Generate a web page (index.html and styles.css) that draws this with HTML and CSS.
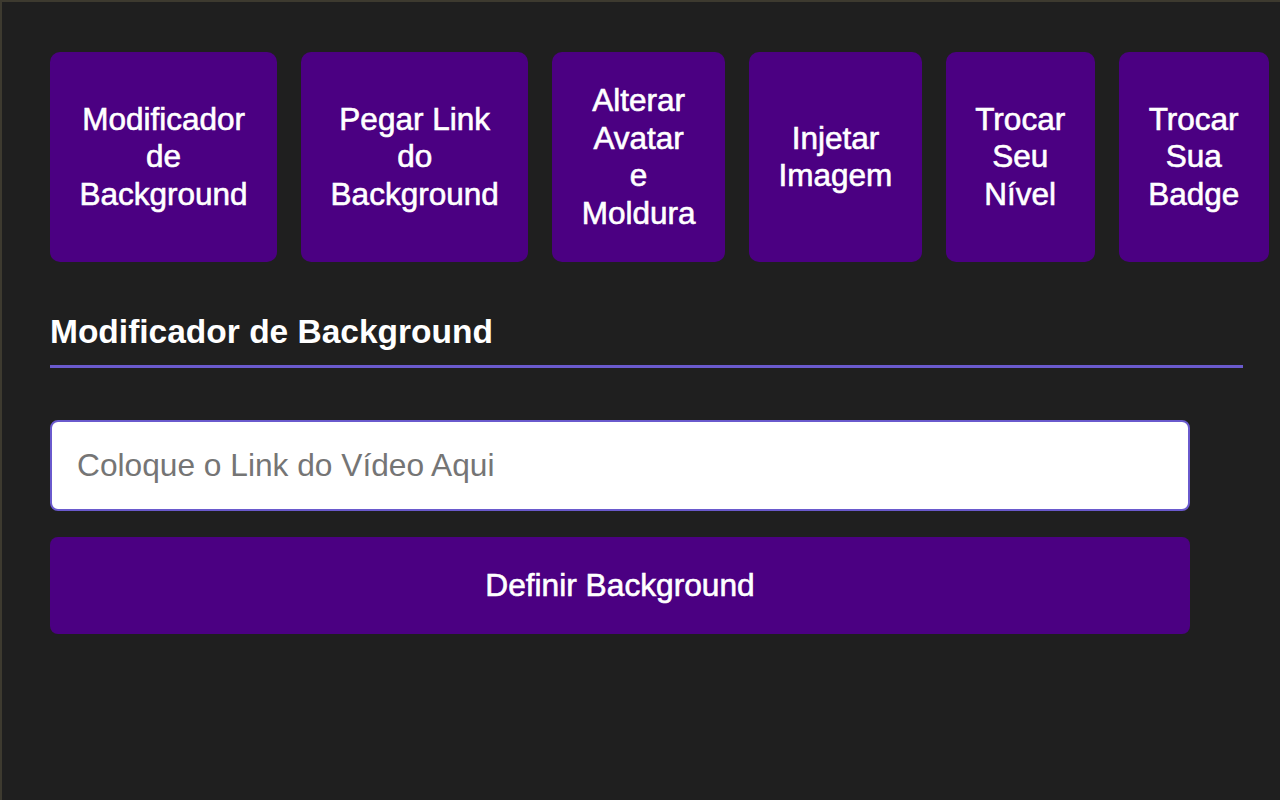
FILE: index.html
```html
<!DOCTYPE html>
<html lang="pt-BR">
<head>
    <meta charset="UTF-8">
    <meta name="viewport" content="width=device-width, initial-scale=1.0">
    <title>Ferramentas de Perfil</title>
    <link rel="stylesheet" href="styles.css">
</head>
<body>

    <div class="popup">
        <!-- Menu of tools -->
        <div class="menu">
            <button class="menu-button">Modificador de Background</button>
            <button class="menu-button">Pegar Link do Background</button>
            <button class="menu-button">Alterar Avatar e Moldura</button>
            <button class="menu-button">Injetar Imagem</button>
            <button class="menu-button">Trocar Seu Nível</button>
            <button class="menu-button">Trocar Sua Badge</button>
        </div>

        <!-- Current section -->
        <div class="section">
            <h2 class="section-title">Modificador de Background</h2>
            <input type="text" class="link-input" placeholder="Coloque o Link do Vídeo Aqui">
            <button class="action-button">Definir Background</button>
        </div>
    </div>

</body>
</html>
```

FILE: styles.css
```css
* {
    margin: 0;
    padding: 0;
    box-sizing: border-box;
}

html, body {
    height: 100%;
}

body {
    background-color: #1f1f1f;
    color: white;
    font-family: "Liberation Sans", Arial, sans-serif;
    border-top: 2px solid #3d3a2f;
    border-left: 2px solid #3d3a2f;
    overflow: hidden;
}

.popup {
    padding: 50px 37px 0 48px;
}

.menu {
    display: flex;
    gap: 24px;
}

.menu-button {
    flex-shrink: 0;
    width: min-content;
    height: 210px;
    padding: 0 29.5px;
    background-color: #4b0082;
    color: white;
    border: none;
    border-radius: 10px;
    font-family: "Liberation Sans", Arial, sans-serif;
    font-size: 31.5px;
    line-height: 37.5px;
    -webkit-text-stroke: 0.6px white;
    cursor: pointer;
}

.section {
    margin-top: 51px;
}

.section-title {
    font-size: 33.5px;
    font-weight: bold;
    padding-bottom: 14px;
    border-bottom: 3px solid #6a5acd;
    margin-bottom: 52px;
}

.link-input {
    display: block;
    width: 1140px;
    height: 91px;
    padding: 0 25px;
    border: 2px solid #6a5acd;
    border-radius: 8px;
    background-color: white;
    font-family: "Liberation Sans", Arial, sans-serif;
    font-size: 31.7px;
    color: #333;
    outline: none;
}

.link-input::placeholder {
    color: #757575;
}

.action-button {
    display: block;
    width: 1140px;
    height: 97px;
    margin-top: 26px;
    background-color: #4b0082;
    color: white;
    border: none;
    border-radius: 8px;
    font-family: "Liberation Sans", Arial, sans-serif;
    font-size: 31.7px;
    -webkit-text-stroke: 0.6px white;
    cursor: pointer;
}
```
